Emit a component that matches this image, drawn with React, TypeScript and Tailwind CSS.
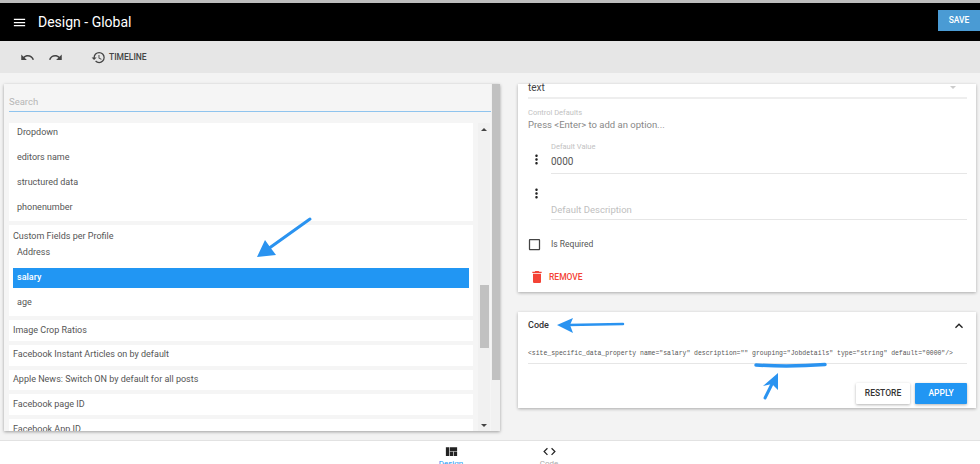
import { MdMenu, MdUndo, MdRedo, MdHistory, MdMoreVert, MdCheckBoxOutlineBlank, MdDelete, MdExpandLess, MdViewQuilt, MdCode } from 'react-icons/md';

const topFields = ['Dropdown', 'editors name', 'structured data', 'phonenumber'];
const singleRows = ['Image Crop Ratios', 'Facebook Instant Articles on by default', 'Apple News: Switch ON by default for all posts', 'Facebook page ID', 'Facebook App ID'];

function Row({ label, active }: { label: string; active?: boolean }) {
  return (
    <div className={`h-[25px] flex items-center text-[9px] ${active ? '' : 'text-[#555]'}`}>
      {active ? (
        <div className="w-full h-5 bg-[#2196f3] text-white font-medium flex items-center pl-1">{label}</div>
      ) : (
        <span className="pl-1">{label}</span>
      )}
    </div>
  );
}

function LeftPanel() {
  return (
    <div className="w-[496px] h-[347px] bg-[#f5f5f5] shadow-[0_1px_3px_rgba(0,0,0,0.35)] flex overflow-hidden">
      <div className="w-[487px] flex flex-col">
        <div className="h-[39px] pl-[5px] pb-[11px] flex flex-col justify-end shrink-0">
          <div className="h-[20px] border-b border-[#8fc4ee] text-[9.5px] text-[#b5b5b5] leading-[20px]">Search</div>
        </div>
        <div className="flex flex-1 min-h-0">
          <div className="w-[464px] ml-[5px] flex flex-col overflow-hidden">
            <div className="bg-white h-[98px] shrink-0 px-1 text-[#555] overflow-hidden">
              <div className="-mt-[3px]">
                {topFields.map((f) => <Row key={f} label={f} />)}
              </div>
            </div>
            <div className="bg-white h-[91px] shrink-0 mt-1 px-1">
              <div className="h-5 pt-[3px] text-[9px] text-[#555] flex items-center">Custom Fields per Profile</div>
              <div className="-mt-[5px]">
                <Row label="Address" />
                <Row label="salary" active />
                <Row label="age" />
              </div>
            </div>
            {singleRows.map((r) => (
              <div key={r} className="bg-white h-[20.75px] shrink-0 mt-1 px-1 flex items-center text-[9px] text-[#555]">{r}</div>
            ))}
          </div>
          <div className="w-[12px] ml-[5px] flex flex-col items-center relative bg-[#f1f1f1]">
            <div className="mt-[5px] w-0 h-0 border-x-[3px] border-x-transparent border-b-[3px] border-b-[#444]" />
            <div className="w-[9px] h-[63px] bg-[#c1c1c1] mt-[154px]" />
            <div className="mt-auto mb-[4px] w-0 h-0 border-x-[3px] border-x-transparent border-t-[3px] border-t-[#444]" />
          </div>
        </div>
      </div>
      <div className="w-[9px] bg-[#f1f1f1]">
        <div className="w-[8px] h-[296px] bg-[#c1c1c1] ml-[1px]" />
      </div>
    </div>
  );
}

function RightPanel() {
  return (
    <div className="w-[458px] flex flex-col">
      <div className="h-[208px] bg-white shadow-[0_1px_3px_rgba(0,0,0,0.3)] pl-[10px] pr-[9px] flex flex-col">
        <div className="h-[13px] border-b-2 border-[#eeeeee] flex justify-between shrink-0 box-content">
          <span className="text-[10px] text-[#444] leading-[7px]">text</span>
          <span className="mr-[11px] mt-[2px] w-0 h-0 border-x-[3px] border-x-transparent border-t-[3px] border-t-[#ccc]" />
        </div>
        <div className="text-[7.5px] text-[#c2c2c2] mt-[9px] leading-[10px]">Control Defaults</div>
        <div className="text-[9.5px] text-[#888] leading-[13px]">Press &lt;Enter&gt; to add an option...</div>
        <div className="flex mt-[11px]">
          <div className="w-[23px] pt-[10px]"><MdMoreVert className="text-[#222] text-[15px] ml-[1px]" /></div>
          <div className="flex-1 border-b border-[#e6e6e6] h-[32px]">
            <div className="text-[7.5px] text-[#c2c2c2] leading-[10px]">Default Value</div>
            <div className="text-[10px] text-[#555] mt-[4px] leading-[12px]">0000</div>
          </div>
        </div>
        <div className="flex mt-[13px]">
          <div className="w-[23px] -mt-[1px]"><MdMoreVert className="text-[#222] text-[15px] ml-[1px]" /></div>
          <div className="flex-1 border-b border-[#e6e6e6] h-[33px] flex items-end pb-[3px]">
            <span className="text-[9.5px] text-[#c0c0c0] leading-[12px]">Default Description</span>
          </div>
        </div>
        <div className="flex items-center mt-[17px]">
          <MdCheckBoxOutlineBlank className="text-[#444] text-[15px] -ml-[1px]" />
          <span className="text-[8.5px] text-[#555] ml-[9px]">Is Required</span>
        </div>
        <div className="flex items-center mt-[17px]">
          <MdDelete className="text-[#f44336] text-[16px] ml-[1px]" />
          <span className="text-[8.5px] font-medium text-[#f44336] ml-[4px]">REMOVE</span>
        </div>
      </div>
      <div className="h-[96px] mt-[20px] bg-white shadow-[0_1px_3px_rgba(0,0,0,0.3)] pl-[10px] pr-[9px] flex flex-col">
        <div className="flex justify-between items-center h-[27px] shrink-0">
          <span className="text-[9px] font-medium text-[#333]">Code</span>
          <MdExpandLess className="text-[#222] text-[16px]" />
        </div>
        <div className="h-[25px] border-b border-[#e6e6e6] pt-[10px] font-['Liberation_Mono',monospace] text-[6.45px] leading-[10px] text-[#555] whitespace-pre shrink-0">
          {'<site_specific_data_property name="salary" description="" grouping="Jobdetails" type="string" default="0000"/>'}
        </div>
        <div className="flex justify-end gap-[5px] mt-[19px]">
          <div className="w-[54px] h-[21px] bg-white shadow-[0_1px_3px_rgba(0,0,0,0.3)] flex items-center justify-center text-[8.5px] font-medium text-[#333] rounded-[1px]">RESTORE</div>
          <div className="w-[52px] h-[21px] bg-[#2196f3] shadow-[0_1px_3px_rgba(0,0,0,0.3)] flex items-center justify-center text-[8.5px] font-medium text-white rounded-[1px]">APPLY</div>
        </div>
      </div>
    </div>
  );
}

function Annotations() {
  return (
    <svg className="absolute inset-0 pointer-events-none" width="980" height="464" fill="none">
      <g stroke="#2a93f0" strokeLinecap="round">
        <path d="M310 219 L268 249" strokeWidth="3" />
        <path d="M623 324 L568 325" strokeWidth="2.5" />
        <path d="M756 365 Q790 367 825 364.5" strokeWidth="3.5" />
        <path d="M765 398 L773 382" strokeWidth="3" />
      </g>
      <g fill="#2a93f0">
        <path d="M257 257 L265 240 L270 247 L276 255 Z" />
        <path d="M557 325 L573 318 L570 325 L573 333 Z" />
        <path d="M778 373 L778 390 L772 384 L763 386 Z" />
      </g>
    </svg>
  );
}

export default function App() {
  return (
    <div className="relative w-[980px] h-[464px] overflow-hidden bg-[#f3f3f3] font-['Roboto',sans-serif] flex flex-col">
      <div className="h-[3px] bg-[#bdbdbd] shrink-0" />
      <header className="h-[38px] bg-black flex items-center justify-between shrink-0">
        <div className="flex items-center text-white">
          <MdMenu className="text-[15px] ml-[12px]" />
          <span className="text-[14px] ml-[11px]">Design - Global</span>
        </div>
        <div className="w-[42px] h-[21px] mb-[3px] bg-[#4a9bd4] text-white text-[8.5px] font-medium flex items-center justify-center">SAVE</div>
      </header>
      <div className="h-[32px] bg-[#e6e6e6] flex items-center text-[#444] shrink-0">
        <MdUndo className="text-[15px] ml-[20px]" />
        <MdRedo className="text-[15px] ml-[13px]" />
        <MdHistory className="text-[15px] ml-[28px]" />
        <span className="text-[8.5px] font-medium ml-[3px]">TIMELINE</span>
      </div>
      <main className="flex-1 min-h-0 flex pt-[11px] pl-[4px]">
        <LeftPanel />
        <div className="ml-[18px]"><RightPanel /></div>
      </main>
      <nav className="h-[24px] bg-white border-t border-[#e2e2e2] flex shrink-0 overflow-hidden">
        <div className="w-[60px] ml-[421px] flex flex-col items-center">
          <MdViewQuilt className="text-[15px] text-[#222] mt-[3px] shrink-0" />
          <span className="text-[8px] text-[#2196f3] leading-[9px] shrink-0">Design</span>
        </div>
        <div className="w-[60px] ml-[38px] flex flex-col items-center">
          <MdCode className="text-[15px] text-[#222] mt-[3px] shrink-0" />
          <span className="text-[8px] text-[#aaa] leading-[9px] shrink-0">Code</span>
        </div>
      </nav>
      <Annotations />
    </div>
  );
}
